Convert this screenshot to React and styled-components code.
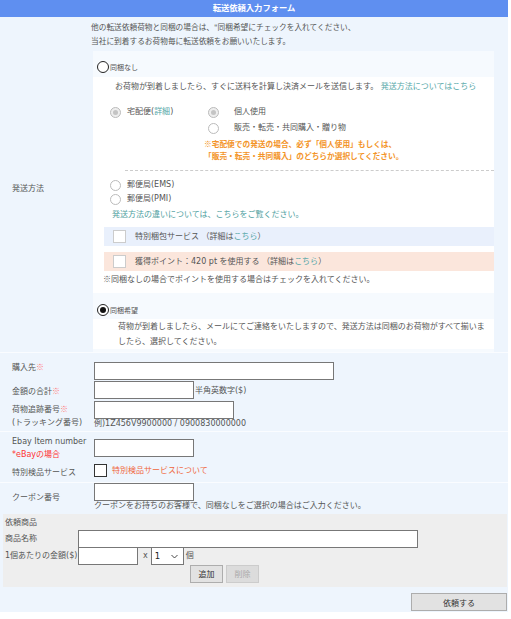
import React from 'react';
import styled, { createGlobalStyle } from 'styled-components';

const GlobalStyle = createGlobalStyle`
  body {
    margin: 0;
    background: #fff;
    font-family: "DejaVu Sans", "Noto Sans CJK JP", sans-serif;
    font-size: 8px;
    color: #555;
  }
  * { box-sizing: border-box; }
`;

const Page = styled.div`
  width: 508px;
  background: #eef5fd;
`;

const Header = styled.div`
  height: 17px;
  line-height: 17px;
  background: #5f8ff0;
  color: #fff;
  font-weight: bold;
  font-size: 8.3px;
  text-align: center;
`;

const Row = styled.div`
  display: grid;
  grid-template-columns: 91px 1fr;
  border-bottom: ${(p) => (p.$line ? '1px solid #fafcff' : 'none')};
`;

const Label = styled.div`
  padding-left: 12px;
  display: flex;
  flex-direction: column;
  justify-content: ${(p) => p.$justify || 'center'};
  padding-top: ${(p) => p.$top || 0}px;
  line-height: 13px;
`;

const Req = styled.span`
  color: #f77;
  font-family: "Noto Sans CJK JP", sans-serif;
`;

const RedNote = styled.span`
  color: #f33;
`;

const Cell = styled.div`
  padding: ${(p) => p.$pad || '0'};
`;

const Intro = styled.div`
  line-height: 14px;
  padding-top: 4px;
  font-size: 7.7px;
`;

const Panel = styled.div`
  margin: 2px 14px 0 2px;
  background: #f6fafe;
  padding: 9px 0 3px;
`;

const OptionHead = styled.div`
  display: flex;
  align-items: center;
  gap: 1px;
  padding-left: 4px;
  height: 14px;
  margin-bottom: ${(p) => p.$gap || 2}px;
  font-size: 7px;
`;

const BigRadio = styled.span`
  width: 12px;
  height: 12px;
  border-radius: 50%;
  border: 1.5px solid #222;
  background: #fff;
  display: inline-flex;
  align-items: center;
  justify-content: center;
  &::after {
    content: '';
    width: 6px;
    height: 6px;
    border-radius: 50%;
    background: ${(p) => (p.$checked ? '#111' : 'transparent')};
  }
`;

const WhiteBox = styled.div`
  background: #fff;
  padding: ${(p) => p.$pad || '3px 0 6px'};
  line-height: ${(p) => p.$lh || 14}px;
`;

const Lead = styled.div`
  padding-left: ${(p) => p.$left || 22}px;
  padding-right: 4px;
`;

const Link = styled.span`
  color: ${(p) => p.$color || '#55a7a8'};
`;

const Choices = styled.div`
  display: grid;
  grid-template-columns: 98px 1fr;
  padding: 10px 0 0 17px;
`;

const ChoiceList = styled.div`
  display: flex;
  flex-direction: column;
`;

const Choice = styled.label`
  display: flex;
  align-items: center;
  gap: ${(p) => p.$gap || 6}px;
  height: ${(p) => p.$h || 16}px;
`;

const SmallRadio = styled.span`
  width: 11px;
  height: 11px;
  border-radius: 50%;
  border: 1px solid #bbb;
  background: ${(p) => (p.$checked ? '#eee' : '#fff')};
  display: inline-flex;
  align-items: center;
  justify-content: center;
  flex: none;
  &::after {
    content: '';
    width: 5px;
    height: 5px;
    border-radius: 50%;
    background: ${(p) => (p.$checked ? '#c4c4c4' : 'transparent')};
  }
`;

const Warn = styled.div`
  color: #f39428;
  font-weight: bold;
  font-size: 7.7px;
  line-height: 12px;
  margin: 2px 0 0 -4px;
  font-family: "Noto Sans CJK JP", sans-serif;
`;

const Dashed = styled.div`
  margin: 8px 0 7px 32px;
  border-top: 1px dashed #ccc;
`;

const Posts = styled.div`
  padding-left: 17px;
`;

const TealNote = styled.div`
  color: #4fa0a0;
  padding: 2px 0 0 19px;
`;

const Extra = styled.div`
  margin: ${(p) => p.$mt || 6}px 0 0 11px;
  height: 19px;
  display: flex;
  align-items: center;
  gap: 9px;
  padding-left: 9px;
  background: ${(p) => p.$bg};
`;

const Box = styled.span`
  width: ${(p) => p.$size || 13}px;
  height: ${(p) => p.$size || 13}px;
  border: 1px solid ${(p) => p.$border || '#ccc'};
  background: #fff;
  display: inline-block;
  flex: none;
`;

const Footnote = styled.div`
  padding: 1px 0 0 10px;
`;

const Input = styled.span`
  display: inline-block;
  width: ${(p) => p.$w}px;
  height: 18px;
  border: 1px solid #777;
  background: #fff;
  vertical-align: middle;
  flex: none;
`;

const Field = styled.div`
  display: flex;
  align-items: center;
  gap: ${(p) => p.$gap || 1}px;
  line-height: 13px;
`;

const Stack = styled.div`
  display: flex;
  flex-direction: column;
  align-items: flex-start;
`;

const Hint = styled.span`
  line-height: ${(p) => p.$lh || 12}px;
`;

const Goods = styled.div`
  margin: 3px 1px 0 3px;
  background: #eeeeee;
  padding: 2px 0 4px 2px;
  line-height: 13px;
`;

const GoodsTitle = styled.div`
  height: 14px;
  line-height: 14px;
`;

const GoodsRow = styled.div`
  display: grid;
  grid-template-columns: 73px auto;
  align-items: start;
  justify-content: start;
  height: 17px;
  line-height: 18px;
`;

const Inline = styled.div`
  display: flex;
  align-items: center;
`;

const Times = styled.span`
  margin: 0 3px 0 5px;
`;

const Select = styled.span`
  width: 33px;
  height: 18px;
  border: 1px solid #777;
  background: #fff;
  display: inline-flex;
  align-items: center;
  justify-content: space-between;
  padding: 0 5px 0 3px;
  color: #222;
  font-size: 8.5px;
  margin-right: 2px;
`;

const Buttons = styled.div`
  display: flex;
  gap: 3px;
  padding-left: 185px;
  margin-top: 1px;
`;

const Button = styled.span`
  height: 18px;
  min-width: ${(p) => p.$w || 0}px;
  display: inline-flex;
  align-items: center;
  justify-content: center;
  background: ${(p) => (p.$disabled ? '#dcdcdc' : '#e2e2e2')};
  color: ${(p) => (p.$disabled ? '#aaa' : '#333')};
  border: 1px solid ${(p) => (p.$disabled ? '#ccc' : '#adadad')};
`;

const Submit = styled.div`
  margin: 3px 1px 0 3px;
  display: flex;
  justify-content: flex-end;
  padding-top: 3px;
  height: 22px;
`;

const Spacer = styled.div`
  height: ${(p) => p.$h}px;
`;

const Chevron = () => (
  <svg width="7" height="5" viewBox="0 0 7 5">
    <path d="M0.5 1 L3.5 4 L6.5 1" fill="none" stroke="#333" strokeWidth="0.9" />
  </svg>
);

export default function App() {
  return (
    <>
      <GlobalStyle />
      <Page>
        <Header>転送依頼入力フォーム</Header>

        <Row $line>
          <Label $top={7}>発送方法</Label>
          <Cell>
            <Intro>
              他の転送依頼荷物と同梱の場合は、"同梱希望にチェックを入れてください、
              <br />
              当社に到着するお荷物毎に転送依頼をお願いいたします。
            </Intro>
            <Panel>
              <OptionHead $gap={3}>
                <BigRadio />
                同梱なし
              </OptionHead>
              <WhiteBox>
                <Lead>
                  お荷物が到着しましたら、すぐに送料を計算し決済メールを送信します。 <Link>発送方法についてはこちら</Link>
                </Lead>
                <Choices>
                  <Choice>
                    <SmallRadio $checked />
                    <span>
                      宅配便(<Link>詳細</Link>)
                    </span>
                  </Choice>
                  <ChoiceList>
                    <Choice $gap={15}>
                      <SmallRadio $checked />
                      個人使用
                    </Choice>
                    <Choice $gap={15}>
                      <SmallRadio />
                      販売・転売・共同購入・贈り物
                    </Choice>
                    <Warn>
                      ※宅配便での発送の場合、必ず「個人使用」もしくは、
                      <br />
                      「販売・転売・共同購入」のどちらか選択してください。
                    </Warn>
                  </ChoiceList>
                </Choices>
                <Dashed />
                <Posts>
                  <Choice $h={14}>
                    <SmallRadio />
                    郵便局(EMS)
                  </Choice>
                  <Choice $h={14}>
                    <SmallRadio />
                    郵便局(PMI)
                  </Choice>
                </Posts>
                <TealNote>発送方法の違いについては、こちらをご覧ください。</TealNote>
                <Extra $bg="#e9f0fc" $mt={5}>
                  <Box />
                  <span>
                    特別梱包サービス （詳細は<Link>こちら</Link>）
                  </span>
                </Extra>
                <Extra $bg="#fbe6dc" $mt={6}>
                  <Box />
                  <span>
                    獲得ポイント：420 pt を使用する （詳細は<Link>こちら</Link>）
                  </span>
                </Extra>
                <Footnote>
                  <Req style={{ color: 'inherit' }}>※</Req>同梱なしの場合でポイントを使用する場合はチェックを入れてください。
                </Footnote>
              </WhiteBox>
              <Spacer $h={10} />
              <OptionHead $gap={2}>
                <BigRadio $checked />
                同梱希望
              </OptionHead>
              <WhiteBox $pad="0" $lh={15}>
                <Lead $left={25}>
                  荷物が到着しましたら、メールにてご連絡をいたしますので、発送方法は同梱のお荷物がすべて揃いましたら、選択してください。
                </Lead>
              </WhiteBox>
            </Panel>
          </Cell>
        </Row>

        <Row>
          <Label>
            <span>
              購入先<Req>※</Req>
            </span>
          </Label>
          <Cell $pad="9px 0 1px 3px">
            <Input $w={240} />
          </Cell>
        </Row>
        <Row>
          <Label>
            <span>
              金額の合計<Req>※</Req>
            </span>
          </Label>
          <Cell $pad="0 0 2px 3px">
            <Field>
              <Input $w={100} />
              半角英数字($)
            </Field>
          </Cell>
        </Row>
        <Row $line>
          <Label $justify="flex-start" $top={1}>
            <span>
              荷物追跡番号<Req>※</Req>
            </span>
            <span>(トラッキング番号)</span>
          </Label>
          <Cell $pad="0 0 2px 3px">
            <Stack>
              <Input $w={140} />
              <Hint $lh={10}>例)1Z456V9900000 / 0900830000000</Hint>
            </Stack>
          </Cell>
        </Row>
        <Row>
          <Label $top={3} $justify="flex-start">
            <span>Ebay Item number</span>
            <RedNote>*eBayの場合</RedNote>
          </Label>
          <Cell $pad="7px 0 6px 3px">
            <Input $w={100} />
          </Cell>
        </Row>
        <Row $line>
          <Label>特別検品サービス</Label>
          <Cell $pad="1px 0 5px 3px">
            <Field $gap={5}>
              <Box $border="#333" />
              <Link $color="#f0663c">特別検品サービスについて</Link>
            </Field>
          </Cell>
        </Row>
        <Row>
          <Label>クーポン番号</Label>
          <Cell $pad="0 0 0 3px">
            <Stack>
              <Input $w={100} />
              <Hint $lh={10}>クーポンをお持ちのお客様で、同梱なしをご選択の場合はご入力ください。</Hint>
            </Stack>
          </Cell>
        </Row>

        <Goods>
          <GoodsTitle>依頼商品</GoodsTitle>
          <GoodsRow>
            <span>商品名称</span>
            <Input $w={340} />
          </GoodsRow>
          <GoodsRow>
            <span>1個あたりの金額($)</span>
            <Inline>
              <Input $w={60} />
              <Times>x</Times>
              <Select>
                1
                <Chevron />
              </Select>
              個
            </Inline>
          </GoodsRow>
          <Buttons>
            <Button $w={33}>追加</Button>
            <Button $w={33} $disabled>
              削除
            </Button>
          </Buttons>
        </Goods>

        <Submit>
          <Button $w={96}>依頼する</Button>
        </Submit>
      </Page>
    </>
  );
}
